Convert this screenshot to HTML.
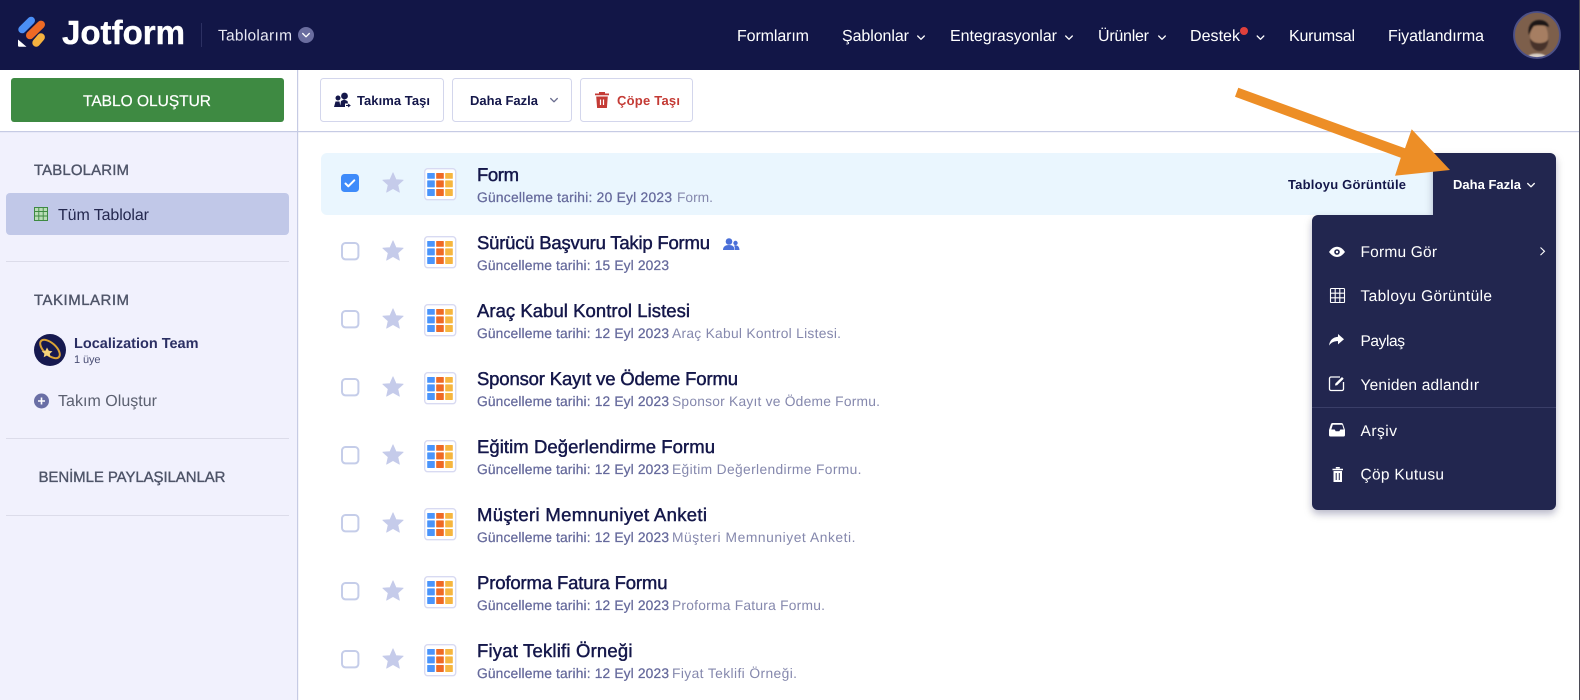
<!DOCTYPE html>
<html lang="tr"><head><meta charset="utf-8"><title>Jotform Tablolarım</title>
<style>
html,body{margin:0;padding:0;background:#fff;width:1580px;height:700px;overflow:hidden}
svg{display:block}
text{font-family:"Liberation Sans",sans-serif;text-rendering:geometricPrecision}
.nav{font-size:16px;fill:#fff}
.h{font-size:15px;fill:#4e5468;stroke:#4e5468;stroke-width:.35}
.tb{font-size:13px;font-weight:700;fill:#14174a}
.ti{font-size:18.5px;fill:#14174a;stroke:#14174a;stroke-width:.45}
.d{font-size:13.8px;fill:#666a9c;stroke:#666a9c;stroke-width:.25}
.e{font-size:13.8px;fill:#8588ad}
.m{font-size:15.5px;fill:#fff}
</style></head><body>
<svg width="1580" height="700" viewBox="0 0 1580 700" xmlns="http://www.w3.org/2000/svg">
<defs>
<filter id="sh" x="-10%" y="-10%" width="120%" height="120%"><feDropShadow dx="0" dy="4" stdDeviation="4" flood-color="#0a0f3c" flood-opacity=".28"/></filter>
<filter id="bl"><feGaussianBlur stdDeviation=".7"/></filter>
<path id="star" d="M0-10.2 3-3.4 10.2-2.9 4.8 2 6.4 9.2 0 5.5-6.4 9.2-4.8 2-10.2-2.9-3-3.4Z" fill="#c5cbea" stroke="#c5cbea" stroke-width=".8" stroke-linejoin="round"/>
<g id="ic">
<rect x="424.7" y="168.7" width="31" height="31" rx="3" fill="#fff" stroke="#d8daf2" stroke-width="1.4"/>
<g fill="#4a94fb"><rect x="427.2" y="173" width="7.6" height="5.8" rx=".6"/><rect x="427.2" y="180.4" width="7.6" height="7" rx=".6"/><rect x="427.2" y="189" width="7.6" height="7" rx=".6"/></g>
<g fill="#ef6a24"><rect x="436.2" y="173" width="7.6" height="5.8" rx=".6"/><rect x="436.2" y="180.4" width="7.6" height="7" rx=".6"/><rect x="436.2" y="189" width="7.6" height="7" rx=".6"/></g>
<g fill="#f6b63f"><rect x="445.2" y="173" width="7.6" height="5.8" rx=".6"/><rect x="445.2" y="180.4" width="7.6" height="7" rx=".6"/><rect x="445.2" y="189" width="7.6" height="7" rx=".6"/></g>
</g>
<g id="row"><rect x="342" y="175" width="16.4" height="16.4" rx="3.5" fill="#fff" stroke="#c5cde9" stroke-width="2"/><use href="#star" x="393" y="183"/><use href="#ic"/></g>
<path id="chev" d="M.7 .5l3.300 3.300 3.300-3.300" fill="none" stroke-width="1.3" stroke-linecap="round" stroke-linejoin="round"/>
</defs>

<!-- page -->
<rect width="1580" height="700" fill="#fff"/>
<rect y="131" width="297" height="569" fill="#f1f1fd"/>
<rect x="297" y="70" width="1.2" height="630" fill="#c6cbe4"/>
<rect y="131" width="1579" height="1.2" fill="#c6cbe4"/>
<rect x="1579" width="1" height="700" fill="#4a4a55"/>

<!-- header -->
<rect width="1579" height="70" fill="#121647"/>
<g stroke-linecap="round" fill="none">
<path d="M22.1 29.5 31.2 20.500" stroke="#4b8ff6" stroke-width="7.6"/>
<path d="M30 35.300 41 24.600" stroke="#ee6a25" stroke-width="8"/>
<path d="M36.200 42.800 41 37.200" stroke="#f5b23f" stroke-width="7.800"/>
</g>
<path d="M18 39.5 26.5 46.8H19.2a1.2 1.2 0 0 1-1.2-1.2Z" fill="#fff"/>
<text x="62" y="44" font-size="33.500" font-weight="700" fill="#fff" stroke="#fff" stroke-width=".4" textLength="123" lengthAdjust="spacingAndGlyphs">Jotform</text>
<rect x="201" y="23" width="1" height="24" fill="#2c3062"/>
<text x="218" y="40.5" font-size="15.5" fill="#e8e9f4" textLength="74" lengthAdjust="spacing">Tablolarım</text>
<circle cx="306" cy="35" r="8" fill="#6a6d9f"/><use href="#chev" x="302" y="33" stroke="#fff"/>

<text class="nav" x="737" y="41" textLength="72">Formlarım</text>
<text class="nav" x="842" y="41" textLength="67">Şablonlar</text><use href="#chev" x="917" y="35.5" stroke="#fff"/>
<text class="nav" x="950" y="41" textLength="107">Entegrasyonlar</text><use href="#chev" x="1065" y="35.5" stroke="#fff"/>
<text class="nav" x="1098" y="41" textLength="51">Ürünler</text><use href="#chev" x="1158" y="35.5" stroke="#fff"/>
<text class="nav" x="1190" y="41" textLength="50">Destek</text><circle cx="1244" cy="31" r="4" fill="#e0403c"/><use href="#chev" x="1256.5" y="35.5" stroke="#fff"/>
<text class="nav" x="1289" y="41" textLength="66">Kurumsal</text>
<text class="nav" x="1388" y="41" textLength="96">Fiyatlandırma</text>

<!-- avatar -->
<clipPath id="av"><circle cx="1537" cy="35" r="22.5"/></clipPath>
<g clip-path="url(#av)">
<rect x="1514" y="12" width="46" height="46" fill="#7d5f4b"/>
<g filter="url(#bl)">
<path d="M1526 58c2-3 6-4.500 11-4.500s9 1.500 11 4.500Z" fill="#d8cfc6"/>
<ellipse cx="1539" cy="36" rx="9" ry="13.500" fill="#a67e62"/>
<path d="M1530 38c0 8 4 13 9.500 13s8.500-5 9-12c-2 3-5 4-9 4s-7-1-9.500-5Z" fill="#46332a"/>
<path d="M1529 35c-2-9 3-15 10-15 6 0 9.500 3 10 7-4-2-11-2-15-1-2 2-3 5-5 9Z" fill="#1f1713"/>
</g>
</g>
<circle cx="1537" cy="35" r="23" fill="none" stroke="#4d5188" stroke-width="1.800"/>

<!-- create btn -->
<rect x="11" y="78" width="273" height="44" rx="3" fill="#3e8a42"/>
<text x="83" y="106" font-size="15.5" fill="#fff" stroke="#fff" stroke-width=".2" textLength="128" lengthAdjust="spacing">TABLO OLUŞTUR</text>

<!-- toolbar -->
<g fill="#fff" stroke="#d3d6ec" stroke-width="1">
<rect x="320.500" y="78.500" width="123" height="43" rx="3"/>
<rect x="452.500" y="78.500" width="119" height="43" rx="3"/>
<rect x="580.500" y="78.500" width="112" height="43" rx="3"/>
</g>
<g fill="#14174a"><circle cx="344.500" cy="96" r="3.400"/><circle cx="338" cy="98" r="2.500"/><path d="M334 107l1.500-5.500h4l1 5.500ZM340 107l1-6 3-1.500 3.500 1.500 .5 2.500h-3v3.500Z"/><path d="M346 105.500h3.500m-1.500-1.500 2 1.500-2 1.500" fill="none" stroke="#14174a" stroke-width="1"/></g>
<text class="tb" x="357" y="105" textLength="73">Takıma Taşı</text>
<text class="tb" x="470" y="105" textLength="68">Daha Fazla</text>
<use href="#chev" x="550" y="98" stroke="#6a6d8f"/>
<path d="M595 93.500h14v1.800h-14ZM599 92h6v1.500h-6ZM596.200 96.500h11.600l-.9 11.500h-9.800Z" fill="#c43b35"/>
<path d="M600.500 99.500v5.500M603.500 99.500v5.500" stroke="#fff" stroke-width="1.200"/>
<text x="617" y="105" font-size="13" font-weight="700" fill="#c43b35" textLength="63">Çöpe Taşı</text>

<!-- sidebar -->
<text class="h" x="34" y="175" textLength="95">TABLOLARIM</text>
<rect x="6" y="193" width="283" height="42" rx="4" fill="#c1c8e8"/>
<rect x="34.500" y="207.500" width="13" height="13" fill="#b9dcb6" stroke="#3e8a42" stroke-width="1"/>
<path d="M34.500 211.500h13M34.500 216h13M38.800 207.500v13M43.200 207.500v13" stroke="#3e8a42" stroke-width=".9"/>
<text x="58" y="220" font-size="16" fill="#24284f" textLength="91">Tüm Tablolar</text>
<rect x="6" y="261" width="283" height="1" fill="#dcdcea"/>
<text class="h" x="34" y="305" textLength="95">TAKIMLARIM</text>
<circle cx="50" cy="350" r="16" fill="#16194f"/>
<ellipse cx="50" cy="349" rx="12" ry="6" transform="rotate(42 50 349)" fill="none" stroke="#d9a235" stroke-width="2"/>
<path d="M47 347.500l1.800 3.200 3.700.6-2.700 2.400.6 3.600-3.400-1.800-3.300 1.800.7-3.600-2.700-2.400 3.700-.6Z" fill="#f4d27a"/>
<text x="74" y="348" font-size="14.500" font-weight="700" fill="#2b2f63" textLength="124.500">Localization Team</text>
<text x="74" y="363" font-size="11" fill="#4a4e74" textLength="26.500">1 üye</text>
<circle cx="41.500" cy="401" r="7.500" fill="#6a6fa5"/><path d="M41.500 397.500v7M38 401h7" stroke="#fff" stroke-width="1.600"/>
<text x="58" y="406" font-size="16" fill="#5b6070" textLength="99">Takım Oluştur</text>
<rect x="6" y="438" width="283" height="1" fill="#dcdcea"/>
<text class="h" x="38.500" y="482" textLength="187">BENİMLE PAYLAŞILANLAR</text>
<rect x="6" y="515" width="283" height="1" fill="#dcdcea"/>

<!-- row 1 highlight -->
<rect x="321" y="153" width="1120" height="62" rx="6" fill="#eaf6fe"/>
<path d="M1433 153H1550a6 6 0 0 1 6 6V504a6 6 0 0 1-6 6H1318a6 6 0 0 1-6-6V221a6 6 0 0 1 6-6H1433Z" fill="#24284f" filter="url(#sh)"/>

<!-- rows -->
<rect x="341" y="174" width="18" height="18" rx="3.500" fill="#3e8bfa"/>
<path d="M345.500 183.500l2.800 2.800 6-6" fill="none" stroke="#fff" stroke-width="2" stroke-linecap="round" stroke-linejoin="round"/>
<use href="#star" x="393" y="183"/><use href="#ic"/>
<text class="ti" x="477" y="181" textLength="42">Form</text>
<text class="d" x="477" y="202" textLength="195">Güncelleme tarihi: 20 Eyl 2023</text>
<text class="e" x="677" y="202" textLength="36">Form.</text>

<use href="#row" y="68"/>
<text class="ti" x="477" y="249" textLength="233">Sürücü Başvuru Takip Formu</text>
<text class="d" x="477" y="270" textLength="192">Güncelleme tarihi: 15 Eyl 2023</text>
<g fill="#4a6fd8"><circle cx="729" cy="241.500" r="3.300"/><path d="M723 250c0-3.500 2.500-5 6-5s5.500 1.500 5.500 5Z"/><circle cx="735.500" cy="243" r="2.200"/><path d="M735 250c0-2.500-.5-3.500-1-4.500 3-1 5.500 1 5.500 4.500Z"/></g>

<use href="#row" y="136"/>
<text class="ti" x="477" y="317" textLength="213">Araç Kabul Kontrol Listesi</text>
<text class="d" x="477" y="338" textLength="192">Güncelleme tarihi: 12 Eyl 2023</text>
<text class="e" x="672" y="338" textLength="169">Araç Kabul Kontrol Listesi.</text>

<use href="#row" y="204"/>
<text class="ti" x="477" y="385" textLength="261">Sponsor Kayıt ve Ödeme Formu</text>
<text class="d" x="477" y="406" textLength="192">Güncelleme tarihi: 12 Eyl 2023</text>
<text class="e" x="672" y="406" textLength="208">Sponsor Kayıt ve Ödeme Formu.</text>

<use href="#row" y="272"/>
<text class="ti" x="477" y="453" textLength="238">Eğitim Değerlendirme Formu</text>
<text class="d" x="477" y="474" textLength="192">Güncelleme tarihi: 12 Eyl 2023</text>
<text class="e" x="672" y="474" textLength="189.500">Eğitim Değerlendirme Formu.</text>

<use href="#row" y="340"/>
<text class="ti" x="477" y="521" textLength="230">Müşteri Memnuniyet Anketi</text>
<text class="d" x="477" y="542" textLength="192">Güncelleme tarihi: 12 Eyl 2023</text>
<text class="e" x="672" y="542" textLength="183.500">Müşteri Memnuniyet Anketi.</text>

<use href="#row" y="408"/>
<text class="ti" x="477" y="589" textLength="190.500">Proforma Fatura Formu</text>
<text class="d" x="477" y="610" textLength="192">Güncelleme tarihi: 12 Eyl 2023</text>
<text class="e" x="672" y="610" textLength="153">Proforma Fatura Formu.</text>

<use href="#row" y="476"/>
<text class="ti" x="477" y="657" textLength="155.500">Fiyat Teklifi Örneği</text>
<text class="d" x="477" y="678" textLength="192">Güncelleme tarihi: 12 Eyl 2023</text>
<text class="e" x="672" y="678" textLength="125">Fiyat Teklifi Örneği.</text>

<!-- row actions -->
<text class="tb" x="1288" y="189" textLength="118">Tabloyu Görüntüle</text>
<text x="1453" y="189" font-size="13" font-weight="700" fill="#fff" textLength="68">Daha Fazla</text>
<use href="#chev" x="1527" y="183" stroke="#fff"/>

<!-- menu -->
<path d="M1329 252c2.500-3.500 5-5.200 8-5.200s5.500 1.700 8 5.200c-2.500 3.300-5 5-8 5s-5.500-1.700-8-5Z" fill="#fff"/><circle cx="1337" cy="252" r="2.800" fill="#24284f"/><circle cx="1337" cy="252" r="1.200" fill="#fff"/>
<text class="m" x="1360.500" y="257" textLength="76.500">Formu Gör</text>
<path d="M1540.500 247.500l4 3.800-4 3.800" fill="none" stroke="#fff" stroke-width="1.100"/>
<g fill="none" stroke="#fff" stroke-width="1.100"><rect x="1330.500" y="288.500" width="14" height="14" rx=".8"/><path d="M1330.500 293.200h14M1330.500 297.800h14M1335.200 288.500v14M1339.800 288.500v14"/></g>
<text class="m" x="1360.500" y="301" textLength="131.500">Tabloyu Görüntüle</text>
<path d="M1338 334l6 5.200-6 5.200v-3.300c-3.800 0-6.500 1-9 4.500.6-5 3.500-8.400 9-8.900Z" fill="#fff"/>
<text class="m" x="1360.500" y="346" textLength="44.500">Paylaş</text>
<path d="M1340 377h-9a1.500 1.500 0 0 0-1.500 1.500v10.500a1.500 1.500 0 0 0 1.500 1.500h11a1.500 1.500 0 0 0 1.500-1.500v-7" fill="none" stroke="#fff" stroke-width="1.300"/>
<path d="M1335 385.500l.4-2 6.600-6.500 1.700 1.700-6.600 6.500Z" fill="#fff"/>
<text class="m" x="1360.500" y="390" textLength="118.500">Yeniden adlandır</text>
<rect x="1312" y="407" width="244" height="1" fill="#3a3e68"/>
<path d="M1332.500 423h9c.7 0 1.200.4 1.500 1l2 6v5a1.500 1.500 0 0 1-1.500 1.500h-13a1.500 1.500 0 0 1-1.500-1.500v-5l2-6c.3-.6.800-1 1.500-1Zm.3 1.800-1.500 4.700h3.400l1 1.800h3.600l1-1.800h3.400l-1.500-4.700Z" fill="#fff" fill-rule="evenodd"/>
<text class="m" x="1360.500" y="436" textLength="36.500">Arşiv</text>
<path d="M1332.500 468.800h10.500v1.400h-10.500ZM1335.800 467h4v1.500h-4ZM1333.500 471h8.500v11h-8.500Z" fill="#fff"/><path d="M1336.200 473v7M1339.300 473v7" stroke="#24284f" stroke-width="1"/>
<text class="m" x="1360.500" y="479.500" textLength="83.500">Çöp Kutusu</text>

<!-- orange arrow -->
<path d="M1238.300 87.700 1405 148.300 1411.700 129.300 1450 170 1395 175.700 1400.800 157.800 1235 96.700Z" fill="#ed8e26"/>
</svg>
</body></html>
